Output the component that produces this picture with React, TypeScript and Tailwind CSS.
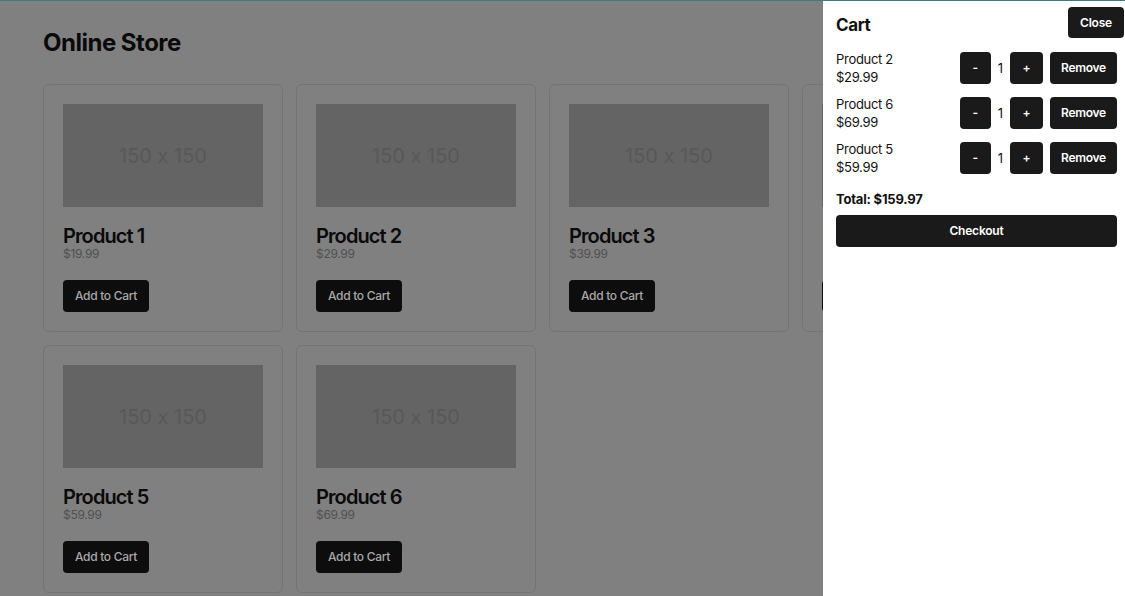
import React from "react";

const products = [
  { id: 1, name: "Product 1", price: 19.99 },
  { id: 2, name: "Product 2", price: 29.99 },
  { id: 3, name: "Product 3", price: 39.99 },
  { id: 4, name: "Product 4", price: 49.99 },
  { id: 5, name: "Product 5", price: 59.99 },
  { id: 6, name: "Product 6", price: 69.99 },
];

const cart = [
  { id: 2, name: "Product 2", price: 29.99, qty: 1 },
  { id: 6, name: "Product 6", price: 69.99, qty: 1 },
  { id: 5, name: "Product 5", price: 59.99, qty: 1 },
];

const ProductCard = ({ name, price }: { name: string; price: number }) => (
  <div className="border border-[#747474] rounded-md p-[19px] flex flex-col">
    <div className="h-[103px] bg-[#646464] flex items-center justify-center text-[20px] text-[#585858] [font-feature-settings:'calt'_0]">150 x 150</div>
    <h2 className="mt-[17px] text-[20px] leading-[24px] font-semibold text-[#0a0a0a] tracking-[-0.9px]">{name}</h2>
    <p className="text-[12px] leading-[12px] text-[#505050] tracking-[-0.3px]">${price.toFixed(2)}</p>
    <button className="mt-[20px] self-start h-[32px] w-[86px] rounded-[4px] bg-[#0d0d0d] text-[12px] font-medium text-[#a9a9a9] tracking-[-0.3px]">Add to Cart</button>
  </div>
);

export default function App() {
  const total = cart.reduce((s, i) => s + i.price * i.qty, 0);
  return (
    <div className="relative w-[1125px] h-[596px] overflow-hidden bg-[#808080] font-['Inter','Liberation_Sans',sans-serif]">
      <div className="px-[43px] pt-[29px]">
        <h1 className="text-[24px] leading-[28px] font-bold text-[#0a0a0a] tracking-[-0.5px]">Online Store</h1>
        <div className="mt-[27px] grid grid-cols-[repeat(4,240px)] gap-x-[13px] gap-y-[13px]">
          {products.map((p) => (
            <ProductCard key={p.id} name={p.name} price={p.price} />
          ))}
        </div>
      </div>

      {/* cart drawer */}
      <div className="absolute top-0 right-0 h-full w-[302px] bg-white pl-[13px] pr-[8px] pt-[7px] text-[#111]">
        <div className="flex items-start justify-between mr-[-7px]">
          <h2 className="pt-[8px] text-[17px] leading-[20px] font-bold tracking-[-0.4px]">Cart</h2>
          <button className="h-[31px] w-[56px] rounded-[4px] bg-[#1a1a1a] text-[12px] font-semibold text-white tracking-[-0.2px]">Close</button>
        </div>
        <div className="mt-[12px] flex flex-col gap-[9px]">
          {cart.map((c) => (
            <div key={c.id} className="flex items-center justify-between">
              <div className="text-[13px] leading-[18px] tracking-[-0.3px]">
                <div>{c.name}</div>
                <div>${c.price.toFixed(2)}</div>
              </div>
              <div className="flex items-center gap-[7px]">
                <button className="h-[32px] w-[31px] rounded-[4px] bg-[#1a1a1a] text-[12px] font-semibold text-white">-</button>
                <span className="text-[13px] leading-[18px]">{c.qty}</span>
                <button className="h-[32px] w-[33px] rounded-[4px] bg-[#1a1a1a] text-[12px] font-semibold text-white">+</button>
                <button className="h-[32px] w-[67px] rounded-[4px] bg-[#1a1a1a] text-[12px] font-semibold text-white tracking-[-0.3px]">Remove</button>
              </div>
            </div>
          ))}
        </div>
        <p className="mt-[14px] text-[13px] leading-[18px] font-bold tracking-[-0.2px]">Total: ${total.toFixed(2)}</p>
        <button className="mt-[7px] w-full h-[32px] rounded-[4px] bg-[#1a1a1a] text-[12px] font-semibold text-white tracking-[-0.2px]">Checkout</button>
      </div>
      <div className="absolute top-0 left-0 w-full h-px bg-[#3d7b82]" />
    </div>
  );
}
